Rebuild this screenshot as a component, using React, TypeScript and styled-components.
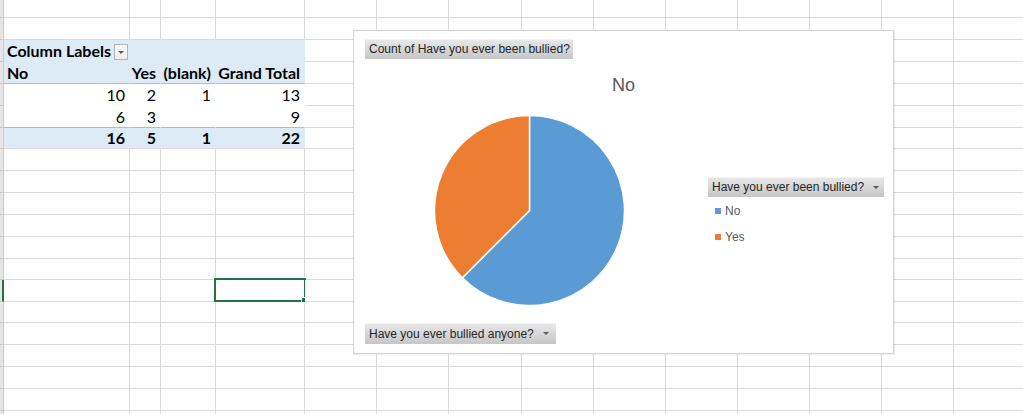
import React from 'react';
import styled, { createGlobalStyle } from 'styled-components';

const COLS = [4, 126, 31, 55, 89, 72, 72, 73, 72, 72, 72, 72, 72, 72, 72];
const ROWS = [18, 22, 22, 22, 22, 22, 21, 22, 22, 22, 22, 22, 21, 22, 21, 22, 22, 22, 22, 22];

const GRID = '#dadada';
const PIVOT_FILL = '#ddebf7';
const PIVOT_LINE = '#9bc2e6';
const SELECT = '#217346';

const PIVOT_START = 2;
const SELECTED_ROW = 13;
const SELECTED_COL = 4;

const pivot = [
  { kind: 'labels', cells: [] as string[] },
  { kind: 'head', cells: ['No', 'Yes', '(blank)', 'Grand Total'] },
  { kind: 'data', cells: ['10', '2', '1', '13'] },
  { kind: 'data', cells: ['6', '3', '', '9'] },
  { kind: 'total', cells: ['16', '5', '1', '22'] },
];

const slices = [
  { label: 'No', value: 10, color: '#5b9bd5' },
  { label: 'Yes', value: 6, color: '#ed7d31' },
];

const GlobalStyle = createGlobalStyle`
  body {
    margin: 0;
    background: #fff;
    overflow: hidden;
  }
`;

function piePaths(size: number) {
  const c = size / 2;
  const r = c - 0.5;
  const total = slices.reduce((s, x) => s + x.value, 0);
  let start = 0;
  return slices.map((s) => {
    const end = start + (s.value / total) * Math.PI * 2;
    const x1 = c + r * Math.sin(start);
    const y1 = c - r * Math.cos(start);
    const x2 = c + r * Math.sin(end);
    const y2 = c - r * Math.cos(end);
    const large = end - start > Math.PI ? 1 : 0;
    start = end;
    return { ...s, d: `M${c},${c} L${x1},${y1} A${r},${r} 0 ${large} 1 ${x2},${y2} Z` };
  });
}

function PivotContent({ kind, cells, col }: { kind: string; cells: string[]; col: number }) {
  if (kind === 'labels') {
    if (col !== 1) return null;
    return (
      <>
        <span>Column Labels</span>
        <DropBox>
          <Tri $size={3} />
        </DropBox>
      </>
    );
  }
  return <span>{cells[col - 1]}</span>;
}

export default function App() {
  return (
    <>
      <GlobalStyle />
      <Sheet>
        {ROWS.map((h, r) => {
          const p = r >= PIVOT_START && r < PIVOT_START + pivot.length ? pivot[r - PIVOT_START] : null;
          return (
            <Row key={r} $h={h}>
              {COLS.map((w, c) => {
                if (c === 0) return <RowHead key={c} $selected={r === SELECTED_ROW} />;
                if (p && c <= 4) {
                  const fill = p.kind !== 'data' ? PIVOT_FILL : '#fff';
                  let bottom = fill;
                  if (p.kind === 'head') bottom = PIVOT_LINE;
                  if (r === PIVOT_START + 3) bottom = PIVOT_LINE;
                  if (p.kind === 'total') bottom = GRID;
                  return (
                    <Cell
                      key={c}
                      $fill={fill}
                      $right={fill}
                      $bottom={bottom}
                      $bold={p.kind !== 'data'}
                      $align={p.kind === 'labels' ? 'space-between' : p.kind === 'head' && c === 1 ? 'flex-start' : 'flex-end'}
                    >
                      <PivotContent kind={p.kind} cells={p.cells} col={c} />
                    </Cell>
                  );
                }
                return (
                  <Cell key={c}>
                    {r === SELECTED_ROW && c === SELECTED_COL && (
                      <Selection>
                        <Handle />
                      </Selection>
                    )}
                  </Cell>
                );
              })}
            </Row>
          );
        })}

        <Chart>
          <FieldButton>Count of Have you ever been bullied?</FieldButton>
          <Title>No</Title>
          <ChartBody>
            <PieWrap>
              <svg width={191} height={191} viewBox="0 0 191 191">
                {piePaths(191).map((s) => (
                  <path key={s.label} d={s.d} fill={s.color} stroke="#fff" strokeWidth={1.5} strokeLinejoin="round" />
                ))}
              </svg>
            </PieWrap>
            <Legend>
              <FieldButton>
                Have you ever been bullied?
                <Tri $size={3.5} />
              </FieldButton>
              {slices.map((s) => (
                <LegendItem key={s.label}>
                  <Swatch $color={s.color} />
                  {s.label}
                </LegendItem>
              ))}
            </Legend>
          </ChartBody>
          <FooterButton>
            Have you ever bullied anyone?
            <Tri $size={3.5} />
          </FooterButton>
        </Chart>
      </Sheet>
    </>
  );
}

const Sheet = styled.div`
  position: relative;
  width: 1023px;
  height: 414px;
  overflow: hidden;
  background: #fff;
  font-family: Lato, 'Liberation Sans', sans-serif;
  font-size: 16px;
  color: #000;
`;
const Row = styled.div<{ $h: number }>`
  display: grid;
  grid-template-columns: ${COLS.map((w) => `${w}px`).join(' ')};
  height: ${(p) => p.$h}px;
`;
const Cell = styled.div<{ $fill?: string; $right?: string; $bottom?: string; $bold?: boolean; $align?: string }>`
  position: relative;
  box-sizing: border-box;
  display: flex;
  align-items: flex-end;
  justify-content: ${(p) => p.$align ?? 'flex-start'};
  padding: 0 4px 1px 3px;
  background: ${(p) => p.$fill ?? '#fff'};
  border-right: 1px solid ${(p) => p.$right ?? GRID};
  border-bottom: 1px solid ${(p) => p.$bottom ?? GRID};
  font-weight: ${(p) => (p.$bold ? 700 : 400)};
  white-space: nowrap;
  line-height: 19px;
`;
const RowHead = styled.div<{ $selected?: boolean }>`
  box-sizing: border-box;
  background: #e6e6e6;
  border-bottom: 1px solid #c8c8c8;
  border-right: ${(p) => (p.$selected ? `2px solid ${SELECT}` : '1px solid #cbcbcb')};
`;
const DropBox = styled.div`
  box-sizing: border-box;
  width: 14px;
  height: 16px;
  margin-right: -3px;
  margin-bottom: 0;
  border: 1px solid #b4b4b4;
  background: linear-gradient(#fbfbfb, #ececec);
  display: flex;
  align-items: center;
  justify-content: center;
`;
const Tri = styled.span<{ $size: number }>`
  display: inline-block;
  width: 0;
  height: 0;
  border-left: ${(p) => p.$size}px solid transparent;
  border-right: ${(p) => p.$size}px solid transparent;
  border-top: ${(p) => p.$size}px solid #595959;
`;
const Selection = styled.div`
  position: absolute;
  top: -2px;
  left: -2px;
  right: -2px;
  bottom: -1px;
  border: 2px solid ${SELECT};
  pointer-events: none;
`;
const Handle = styled.div`
  position: absolute;
  right: -4px;
  bottom: -4px;
  width: 5px;
  height: 5px;
  background: ${SELECT};
  border: 1px solid #fff;
`;
const Chart = styled.div`
  position: absolute;
  left: 353px;
  top: 30px;
  width: 541px;
  height: 324px;
  box-sizing: border-box;
  display: flex;
  flex-direction: column;
  align-items: flex-start;
  padding: 8px 11px;
  background: #fff;
  border: 1px solid #d4d4d4;
  box-shadow: 1px 1px 1px rgba(0, 0, 0, 0.06);
  font-family: 'Liberation Sans', Arial, sans-serif;
`;
const FieldButton = styled.div`
  box-sizing: border-box;
  height: 20px;
  display: inline-flex;
  align-items: center;
  gap: 9px;
  padding: 0 3px 0 4px;
  background: linear-gradient(#e9e9e9, #c6c6c6);
  box-shadow: inset 0 1px 0 rgba(255, 255, 255, 0.5);
  color: #262626;
  font-size: 12px;
  white-space: nowrap;
`;
const FooterButton = styled(FieldButton)`
  height: 21px;
  margin-top: 17px;
  padding-right: 7px;
`;
const Title = styled.div`
  align-self: stretch;
  margin-top: 15px;
  text-align: center;
  font-size: 18px;
  line-height: 22px;
  color: #595959;
`;
const ChartBody = styled.div`
  display: flex;
  align-items: flex-start;
  margin-top: 19px;
`;
const PieWrap = styled.div`
  margin-left: 69px;
  width: 191px;
  height: 191px;
  svg {
    display: block;
  }
`;
const Legend = styled.div`
  margin-left: 83px;
  margin-top: 62px;
  display: flex;
  flex-direction: column;
  gap: 2px;
  ${FieldButton} {
    width: 176px;
    justify-content: space-between;
    padding-right: 8px;
  }
`;
const LegendItem = styled.div`
  display: flex;
  align-items: center;
  height: 24px;
  padding-left: 7px;
  gap: 4px;
  font-size: 12px;
  color: #595959;
`;
const Swatch = styled.span<{ $color: string }>`
  width: 6px;
  height: 6px;
  background: ${(p) => p.$color};
`;
